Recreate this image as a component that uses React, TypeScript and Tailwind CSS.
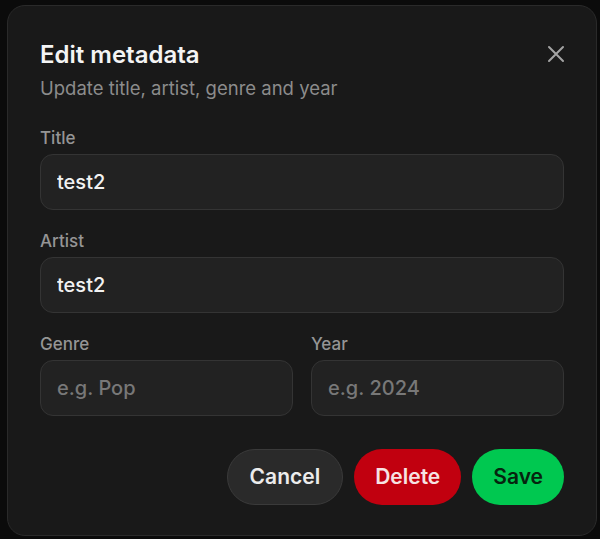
import { useState } from "react"

function CloseIcon() {
  return (
    <svg width="18" height="18" viewBox="0 0 18 18" fill="none" stroke="currentColor" strokeWidth="2" strokeLinecap="round">
      <path d="M2 2l14 14M16 2L2 16" />
    </svg>
  )
}

interface FieldProps {
  label: string
  value: string
  placeholder?: string
  onChange: (v: string) => void
}

function Field({ label, value, placeholder, onChange }: FieldProps) {
  return (
    <label className="flex flex-col gap-[6px] min-w-0">
      <span className="text-[17px] leading-5 font-medium text-[#959595]">{label}</span>
      <input
        value={value}
        placeholder={placeholder}
        onChange={(e) => onChange(e.target.value)}
        className="h-[56px] w-full rounded-[13px] border border-[#343434] bg-[#222222] px-4 text-[20px] font-medium text-[#f2f2f2] placeholder:text-[#787878] outline-none"
      />
    </label>
  )
}

export default function App() {
  const [title, setTitle] = useState("test2")
  const [artist, setArtist] = useState("test2")
  const [genre, setGenre] = useState("")
  const [year, setYear] = useState("")

  return (
    <div className="h-[539px] w-[600px] bg-[#0b0b0b] pl-[7px] pt-[5px]" style={{ fontFamily: "Inter, 'Noto Sans', sans-serif" }}>
      <div className="flex h-[531px] w-[590px] flex-col rounded-[18px] border border-[#2a2a2a] bg-[#191919] px-8 pt-[34px] pb-[31px]">
        <div className="flex items-start justify-between">
          <div>
            <h2 className="text-[24px] leading-[30px] font-semibold text-[#f4f4f4]">Edit metadata</h2>
            <p className="mt-[6px] text-[18.5px] leading-6 text-[#8c8c8c]">Update title, artist, genre and year</p>
          </div>
          <button className="mt-[5px] mr-[-1px] text-[#a3a3a3]" aria-label="Close">
            <CloseIcon />
          </button>
        </div>

        <div className="mt-[28px] flex flex-col gap-[21px]">
          <Field label="Title" value={title} onChange={setTitle} />
          <Field label="Artist" value={artist} onChange={setArtist} />
          <div className="grid grid-cols-2 gap-[18px]">
            <Field label="Genre" value={genre} placeholder="e.g. Pop" onChange={setGenre} />
            <Field label="Year" value={year} placeholder="e.g. 2024" onChange={setYear} />
          </div>
        </div>

        <div className="mt-[33px] flex justify-end gap-[11px]">
          <button className="h-[56px] rounded-full border border-[#3a3a3a] bg-[#2a2a2a] px-[22px] text-[21px] font-semibold text-[#ececec]">
            Cancel
          </button>
          <button className="h-[56px] rounded-full bg-[#c1000f] px-[21px] text-[21px] font-semibold text-[#f6e3e3]">
            Delete
          </button>
          <button className="h-[56px] rounded-full bg-[#00c850] px-[21px] text-[21px] font-semibold text-[#06240f]">
            Save
          </button>
        </div>
      </div>
    </div>
  )
}
